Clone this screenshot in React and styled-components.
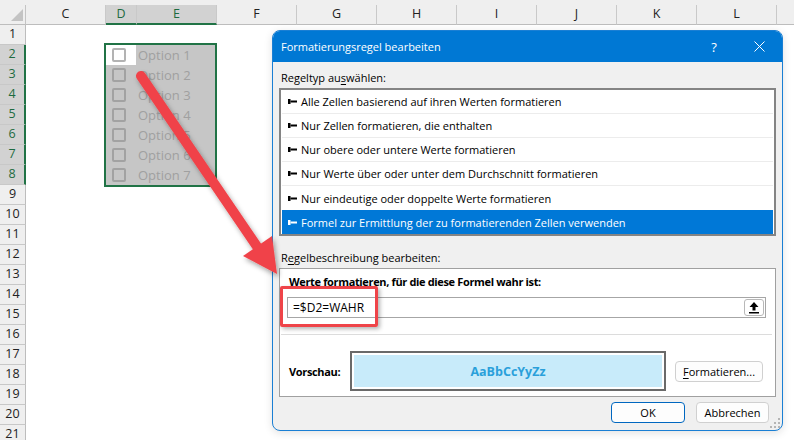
import React from 'react';
import styled, { createGlobalStyle } from 'styled-components';

const GlobalStyle = createGlobalStyle`
  html, body { margin: 0; padding: 0; background: #fff; }
  body { width: 794px; height: 440px; overflow: hidden; font-family: "Open Sans", "Noto Sans", sans-serif; }
  * { box-sizing: border-box; }
`;

const GREEN = '#217346';

const Page = styled.div`
  position: relative;
  width: 794px;
  height: 440px;
  overflow: hidden;
  background: #fff;
`;

const Sheet = styled.div`
  display: flex;
  flex-direction: column;
  width: 100%;
  height: 100%;
`;

const HeaderBar = styled.div`
  display: flex;
  flex: none;
  height: 25px;
  padding-top: 5px;
  background: #efefef;
`;

const Corner = styled.div`
  flex: none;
  width: 26px;
  height: 20px;
  border-right: 1px solid #c4c4c4;
  border-bottom: 1px solid #bdbdbd;
  display: flex;
  align-items: flex-end;
  justify-content: flex-end;
  padding: 0 2px 3px 0;
`;

const ColHead = styled.div`
  flex: none;
  width: ${p => p.$w}px;
  height: 20px;
  border-right: 1px solid #c9c9c9;
  border-bottom: ${p => (p.$sel ? `2px solid ${GREEN}` : '1px solid #bdbdbd')};
  background: ${p => (p.$sel ? '#d2d2d2' : 'transparent')};
  color: ${p => (p.$sel ? '#1d6b40' : '#222')};
  font-size: 12.5px;
  line-height: 1;
  display: flex;
  align-items: center;
  justify-content: center;
`;

const Body = styled.div`
  display: flex;
  flex: 1;
  min-height: 0;
`;

const RowHeads = styled.div`
  flex: none;
  width: 26px;
  display: flex;
  flex-direction: column;
  background: #efefef;
`;

const RowHead = styled.div`
  flex: none;
  height: 20px;
  border-bottom: 1px solid #c8c8c8;
  border-right: ${p => (p.$sel ? `2px solid ${GREEN}` : '1px solid #bdbdbd')};
  background: ${p => (p.$sel ? '#d2d2d2' : '#efefef')};
  color: ${p => (p.$sel ? '#1d6b40' : '#222')};
  font-size: 12.5px;
  line-height: 1;
  display: flex;
  align-items: center;
  justify-content: center;
`;

const CellArea = styled.div`
  position: relative;
  flex: 1;
  background: #fff;
`;

const SelectionBox = styled.div`
  position: absolute;
  left: 78px;
  top: 18px;
  width: 113px;
  height: 144px;
  border: 2px solid ${GREEN};
  background: #c6c6c6;
  display: flex;
  flex-direction: column;
`;

const OptionRow = styled.div`
  display: flex;
  align-items: center;
  height: 20px;
  flex: none;
`;

const CheckCell = styled.div`
  flex: none;
  width: 30px;
  height: 20px;
  display: flex;
  align-items: center;
  padding-left: 6px;
  background: ${p => (p.$active ? '#fff' : 'transparent')};
`;

const CheckBox = styled.div`
  width: 14px;
  height: 14px;
  border: 2px solid ${p => (p.$active ? '#b3b3b3' : '#a2a2a2')};
  border-radius: 2px;
  background: ${p => (p.$active ? '#fff' : 'transparent')};
`;

const OptionLabel = styled.span`
  padding-left: 2px;
  font-size: 13px;
  line-height: 20px;
  color: #a0a0a0;
  white-space: nowrap;
`;

/* Dialog */
const Dialog = styled.div`
  position: absolute;
  left: 272px;
  top: 30px;
  width: 511px;
  height: 401px;
  border: 1px solid #1a7fd4;
  border-radius: 8px;
  background: #f0f0f0;
  overflow: hidden;
  display: flex;
  flex-direction: column;
  font-size: 11px;
  color: #000;
  box-shadow: 0 2px 8px rgba(0, 0, 0, 0.12);
`;

const TitleBar = styled.div`
  flex: none;
  height: 31px;
  background: #0078d4;
  color: #fff;
  display: flex;
  align-items: center;
  padding-left: 8px;
`;

const Title = styled.div`
  flex: 1;
  font-size: 11px;
  white-space: nowrap;
`;

const TitleButton = styled.div`
  flex: none;
  width: ${p => p.$w}px;
  height: 31px;
  display: flex;
  align-items: center;
  justify-content: center;
  font-size: 13px;
`;

const DialogBody = styled.div`
  flex: 1;
  display: flex;
  flex-direction: column;
  padding: 8px 6px 0 6px;
`;

const SectionLabel = styled.div`
  height: 16px;
  line-height: 16px;
  padding-left: 2px;
  margin-top: ${p => p.$mt || 0}px;
  white-space: nowrap;
`;

const Key = styled.span`
  text-decoration: underline;
  text-underline-offset: 2px;
`;

const ListBox = styled.div`
  margin-top: 2px;
  height: 148px;
  border: 2px solid #848484;
  background: #fff;
  padding: 0 1px;
  display: flex;
  flex-direction: column;
`;

const ListItem = styled.div`
  flex: none;
  height: 24px;
  display: flex;
  align-items: center;
  gap: 4px;
  padding-left: 6px;
  border-bottom: ${p => (p.$last ? 'none' : '1px solid #ececec')};
  background: ${p => (p.$sel ? '#0078d7' : 'transparent')};
  color: ${p => (p.$sel ? '#fff' : '#000')};
  white-space: nowrap;
`;

const Panel = styled.div`
  position: relative;
  margin-top: 2px;
  height: 129px;
  border: 1px solid #a0a0a0;
  background: #fff;
  display: flex;
  flex-direction: column;
  padding-top: 5px;
`;

const BoldLabel = styled.div`
  height: 16px;
  line-height: 16px;
  padding-left: 9px;
  font-weight: 700;
  letter-spacing: -0.35px;
  white-space: nowrap;
`;

const InputField = styled.div`
  margin: 7px 9px 0 7px;
  height: 21px;
  border: 1px solid #a6a6a6;
  background: #fff;
  display: flex;
  align-items: center;
  padding: 0 1px 0 5px;
`;

const InputText = styled.span`
  flex: 1;
  font-size: 12px;
  white-space: nowrap;
`;

const PickButton = styled.div`
  flex: none;
  width: 20px;
  height: 17px;
  border: 1px solid #b8b8b8;
  border-radius: 3px;
  background: #fff;
  display: flex;
  align-items: center;
  justify-content: center;
`;

const Separator = styled.div`
  margin: 16px 3px 0 1px;
  height: 1px;
  background: #dcdcdc;
`;

const PreviewRow = styled.div`
  margin-top: 16px;
  display: flex;
  align-items: center;
  padding-left: 9px;
`;

const PreviewLabel = styled.div`
  width: 61px;
  font-weight: 700;
  letter-spacing: -0.35px;
  white-space: nowrap;
`;

const PreviewBox = styled.div`
  width: 316px;
  height: 40px;
  border: 2px solid #6a6a6a;
  padding: 2px;
  background: #fff;
`;

const PreviewFill = styled.div`
  height: 100%;
  background: #c8ebfa;
  display: flex;
  align-items: center;
  justify-content: center;
  color: #2aa0da;
  font-weight: 700;
  font-size: 12.5px;
`;

const Button = styled.div`
  flex: none;
  width: ${p => p.$w}px;
  height: 21px;
  margin-left: ${p => p.$ml || 0}px;
  border: 1px solid ${p => (p.$primary ? '#0067c0' : '#d0d0d0')};
  border-radius: 4px;
  background: #fdfdfd;
  display: flex;
  align-items: center;
  justify-content: center;
  white-space: nowrap;
`;

const ButtonRow = styled.div`
  margin-top: 5px;
  display: flex;
  justify-content: flex-end;
  gap: 11px;
  padding-right: 7px;
`;

const Highlight = styled.div`
  position: absolute;
  left: 0;
  top: 17px;
  width: 98px;
  height: 41px;
  border: 3px solid #ef4449;
  border-radius: 2px;
  box-shadow: 2px 2px 4px rgba(0, 0, 0, 0.3);
`;

const Grip = styled.svg`
  position: absolute;
  right: 2px;
  bottom: 2px;
`;

const ArrowLayer = styled.svg`
  position: absolute;
  left: 0;
  top: 0;
  pointer-events: none;
`;

const cols = [
  { l: 'C', w: 80 },
  { l: 'D', w: 31, sel: true },
  { l: 'E', w: 80, sel: true },
  { l: 'F', w: 80 },
  { l: 'G', w: 80 },
  { l: 'H', w: 80 },
  { l: 'I', w: 80 },
  { l: 'J', w: 80 },
  { l: 'K', w: 80 },
  { l: 'L', w: 80 },
  { l: '', w: 80 },
];

const rows = Array.from({ length: 21 }, (_, i) => i + 1);

const rules = [
  'Alle Zellen basierend auf ihren Werten formatieren',
  'Nur Zellen formatieren, die enthalten',
  'Nur obere oder untere Werte formatieren',
  'Nur Werte über oder unter dem Durchschnitt formatieren',
  'Nur eindeutige oder doppelte Werte formatieren',
  'Formel zur Ermittlung der zu formatierenden Zellen verwenden',
];

const RuleIcon = () => (
  <svg width="9" height="5" viewBox="0 0 9 5">
    <rect x="0" y="0" width="2.5" height="5" fill="currentColor" />
    <rect x="2.5" y="1.5" width="6.5" height="2" fill="currentColor" />
  </svg>
);

export default function App() {
  return (
    <Page>
      <GlobalStyle />
      <Sheet>
        <HeaderBar>
          <Corner>
            <svg width="12" height="12" viewBox="0 0 12 12">
              <polygon points="12,0 12,12 0,12" fill="#c3c3c3" />
            </svg>
          </Corner>
          {cols.map((c, i) => (
            <ColHead key={i} $w={c.w} $sel={c.sel}>{c.l}</ColHead>
          ))}
        </HeaderBar>
        <Body>
          <RowHeads>
            {rows.map(r => (
              <RowHead key={r} $sel={r >= 2 && r <= 8}>{r}</RowHead>
            ))}
          </RowHeads>
          <CellArea>
            <SelectionBox>
              {[1, 2, 3, 4, 5, 6, 7].map(n => (
                <OptionRow key={n}>
                  <CheckCell $active={n === 1}>
                    <CheckBox $active={n === 1} />
                  </CheckCell>
                  <OptionLabel>Option {n}</OptionLabel>
                </OptionRow>
              ))}
            </SelectionBox>
          </CellArea>
        </Body>
      </Sheet>

      <Dialog>
        <TitleBar>
          <Title>Formatierungsregel bearbeiten</Title>
          <TitleButton $w={44}>?</TitleButton>
          <TitleButton $w={46}>
            <svg width="11" height="11" viewBox="0 0 11 11">
              <path d="M0.5 0.5 L10.5 10.5 M10.5 0.5 L0.5 10.5" stroke="#fff" strokeWidth="1" />
            </svg>
          </TitleButton>
        </TitleBar>
        <DialogBody>
          <SectionLabel>Regeltyp au<Key>s</Key>wählen:</SectionLabel>
          <ListBox>
            {rules.map((r, i) => (
              <ListItem key={i} $sel={i === 5} $last={i >= 4}>
                <RuleIcon />
                <span>{r}</span>
              </ListItem>
            ))}
          </ListBox>
          <SectionLabel $mt={14}>R<Key>e</Key>gelbeschreibung bearbeiten:</SectionLabel>
          <Panel>
            <BoldLabel>Werte f<Key>o</Key>rmatieren, für die diese Formel wahr ist:</BoldLabel>
            <InputField>
              <InputText>=$D2=WAHR</InputText>
              <PickButton>
                <svg width="10" height="12" viewBox="0 0 10 12">
                  <polygon points="5,0 9.5,5 6.5,5 6.5,8.5 3.5,8.5 3.5,5 0.5,5" fill="#000" />
                  <rect x="0" y="10" width="10" height="1.5" fill="#000" />
                </svg>
              </PickButton>
            </InputField>
            <Separator />
            <PreviewRow>
              <PreviewLabel>Vorschau:</PreviewLabel>
              <PreviewBox>
                <PreviewFill>AaBbCcYyZz</PreviewFill>
              </PreviewBox>
              <Button $w={88} $ml={9}><Key>F</Key>ormatieren...</Button>
            </PreviewRow>
            <Highlight />
          </Panel>
          <ButtonRow>
            <Button $w={74} $primary>OK</Button>
            <Button $w={73}>Abbrechen</Button>
          </ButtonRow>
        </DialogBody>
        <Grip width="10" height="10" viewBox="0 0 10 10">
          <rect x="8" y="0" width="2" height="2" fill="#b5b5b5" />
          <rect x="4" y="4" width="2" height="2" fill="#b5b5b5" />
          <rect x="8" y="4" width="2" height="2" fill="#b5b5b5" />
          <rect x="0" y="8" width="2" height="2" fill="#b5b5b5" />
          <rect x="4" y="8" width="2" height="2" fill="#b5b5b5" />
          <rect x="8" y="8" width="2" height="2" fill="#b5b5b5" />
        </Grip>
      </Dialog>

      <ArrowLayer width="794" height="440" viewBox="0 0 794 440">
        <defs>
          <filter id="arrowShadow" x="-20%" y="-20%" width="140%" height="140%">
            <feDropShadow dx="2" dy="3" stdDeviation="2.5" floodColor="#000" floodOpacity="0.35" />
          </filter>
        </defs>
        <g filter="url(#arrowShadow)">
          <line x1="141" y1="76" x2="258" y2="248" stroke="#f04349" strokeWidth="10" strokeLinecap="round" />
          <polygon points="277,274 272,236 243,256" fill="#f04349" />
        </g>
      </ArrowLayer>
    </Page>
  );
}
